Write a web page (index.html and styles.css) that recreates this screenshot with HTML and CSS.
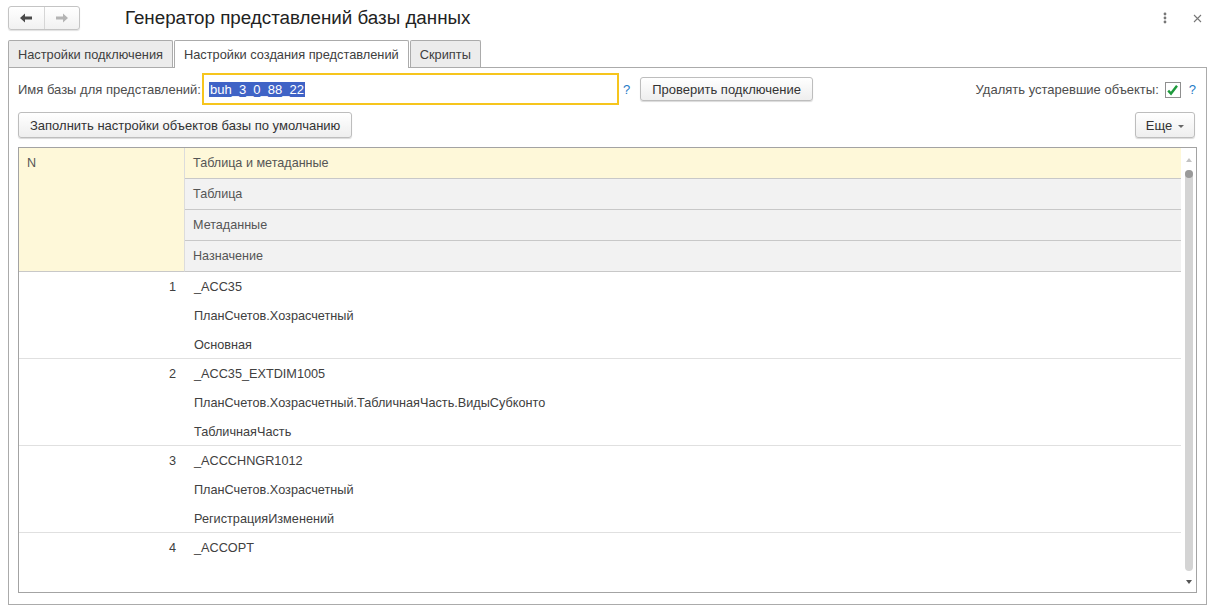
FILE: index.html
```html
<!DOCTYPE html>
<html lang="ru">
<head>
<meta charset="utf-8">
<title>Генератор представлений базы данных</title>
<link rel="stylesheet" href="styles.css">
</head>
<body>
<div class="topbar">
  <div class="nav">
    <span class="nav-btn">
      <svg width="14" height="12" viewBox="0 0 14 12"><path d="M1 6 L6 1.5 L6 4.6 L13 4.6 L13 7.4 L6 7.4 L6 10.5 Z" fill="#4a4a4a"/></svg>
    </span>
    <span class="nav-btn">
      <svg width="14" height="12" viewBox="0 0 14 12"><path d="M13 6 L8 1.5 L8 4.6 L1 4.6 L1 7.4 L8 7.4 L8 10.5 Z" fill="#b4b4b4"/></svg>
    </span>
  </div>
  <div class="title">Генератор представлений базы данных</div>
  <div class="win-icons">
    <svg class="more" width="4" height="12" viewBox="0 0 4 12"><circle cx="2" cy="2" r="1.4" fill="#777"/><circle cx="2" cy="6" r="1.4" fill="#777"/><circle cx="2" cy="10" r="1.4" fill="#777"/></svg>
    <svg class="close" width="9" height="9" viewBox="0 0 9 9"><path d="M1 1 L8 8 M8 1 L1 8" stroke="#777" stroke-width="1.1"/></svg>
  </div>
</div>

<div class="tabs">
  <div class="tab">Настройки подключения</div>
  <div class="tab active">Настройки создания представлений</div>
  <div class="tab">Скрипты</div>
</div>

<div class="panel">
  <div class="row row1">
    <span class="label">Имя базы для представлений:</span>
    <div class="input"><span class="sel">buh_3_0_88_22</span></div>
    <span class="help">?</span>
    <button class="btn btn-check">Проверить подключение</button>
    <div class="spacer"></div>
    <span class="label">Удалять устаревшие объекты:</span>
    <span class="checkbox">
      <svg width="13" height="13" viewBox="0 0 13 13"><path d="M2.2 6.6 L5 9.6 L11 1.8" fill="none" stroke="#1e9a3c" stroke-width="2.4"/></svg>
    </span>
    <span class="help help-right">?</span>
  </div>
  <div class="row row2">
    <button class="btn btn-fill">Заполнить настройки объектов базы по умолчанию</button>
    <div class="spacer"></div>
    <button class="btn btn-more">Еще <span class="caret"></span></button>
  </div>

  <div class="table">
    <div class="table-main">
      <div class="thead">
        <div class="th-n">N</div>
        <div class="th th-yellow">Таблица и метаданные</div>
        <div class="th">Таблица</div>
        <div class="th">Метаданные</div>
        <div class="th">Назначение</div>
      </div>
      <div class="tbody">
        <div class="rec">
          <div class="num">1</div>
          <div class="cells"><div>_ACC35</div><div>ПланСчетов.Хозрасчетный</div><div>Основная</div></div>
        </div>
        <div class="rec">
          <div class="num">2</div>
          <div class="cells"><div>_ACC35_EXTDIM1005</div><div>ПланСчетов.Хозрасчетный.ТабличнаяЧасть.ВидыСубконто</div><div>ТабличнаяЧасть</div></div>
        </div>
        <div class="rec">
          <div class="num">3</div>
          <div class="cells"><div>_ACCCHNGR1012</div><div>ПланСчетов.Хозрасчетный</div><div>РегистрацияИзменений</div></div>
        </div>
        <div class="rec rec-last">
          <div class="num">4</div>
          <div class="cells"><div>_ACCOPT</div></div>
        </div>
      </div>
    </div>
    <div class="scroll">
      <span class="arrow-up"></span>
      <div class="track"><span class="knob"></span></div>
      <span class="arrow-down"></span>
    </div>
  </div>
</div>
</body>
</html>
```

FILE: styles.css
```css
* { box-sizing: border-box; }
html, body { margin: 0; padding: 0; background: #fff; }
body {
  font-family: "Liberation Sans", Arial, sans-serif;
  font-size: 13px;
  color: #4d4d4d;
  width: 1217px;
  height: 610px;
  overflow: hidden;
}

.topbar {
  height: 36px;
  display: flex;
  align-items: center;
  padding-left: 8px;
}
.nav {
  display: flex;
  width: 72px;
  height: 24px;
  border: 1px solid #c4c4c4;
  border-radius: 3px;
  background: linear-gradient(#ffffff, #f1f1f1);
  box-shadow: 0 1px 1px rgba(0,0,0,0.12);
}
.nav-btn {
  flex: 1;
  display: flex;
  align-items: center;
  justify-content: center;
}
.nav-btn + .nav-btn { border-left: 1px solid #d6d6d6; }
.title {
  margin-left: 45px;
  font-size: 18.8px;
  color: #222;
  flex: 1;
}
.win-icons {
  display: flex;
  align-items: center;
  gap: 26px;
  padding-right: 15px;
}

.tabs {
  display: flex;
  margin-top: 4px;
  padding-left: 8px;
  height: 27px;
  position: relative;
  z-index: 2;
}
.tab {
  height: 27px;
  padding: 0 9px;
  display: flex;
  align-items: center;
  background: #ececec;
  border: 1px solid #ababab;
  border-bottom: none;
  border-radius: 2px 2px 0 0;
  color: #404040;
  font-size: 12.8px;
  white-space: nowrap;
}
.tab + .tab { margin-left: 1px; }
.tab.active {
  background: #fff;
  height: 28px;
}

.panel {
  margin: 0 10px 0 8px;
  height: 538px;
  border: 1px solid #ababab;
  padding: 5px 10px 0 9px;
  position: relative;
  z-index: 1;
}

.row { display: flex; align-items: center; }
.row1 { height: 32px; }
.row2 { height: 28px; margin-top: 6px; }
.spacer { flex: 1; }
.label { color: #4d4d4d; white-space: nowrap; }

.input {
  width: 417px;
  height: 32px;
  margin-left: 1px;
  border: 2px solid #f6c51d;
  display: flex;
  align-items: center;
  padding-left: 5px;
}
.sel {
  background: #3f63c6;
  color: #fff;
  line-height: 15px;
  padding: 0 1px;
}
.help {
  color: #1f7bc6;
  margin-left: 4px;
  font-size: 13px;
}
.btn {
  font-family: inherit;
  font-size: 13px;
  color: #333;
  background: linear-gradient(#ffffff, #eeeeee);
  border: 1px solid #bdbdbd;
  border-radius: 3px;
  box-shadow: 0 1px 1px rgba(0,0,0,0.15);
  padding: 0 12px;
  margin: 0;
  white-space: nowrap;
}
.btn-check { height: 24px; margin-left: 10px; padding: 0 11px; }
.btn-fill { height: 26px; padding: 0 11px; }
.btn-more { height: 26px; width: 60px; margin-right: 1px; display: flex; align-items: center; justify-content: center; padding: 0; gap: 6px; }
.caret {
  width: 0; height: 0;
  border-left: 3px solid transparent;
  border-right: 3px solid transparent;
  border-top: 3px solid #666;
  margin-top: 2px;
}

.checkbox {
  width: 16px;
  height: 16px;
  border: 1px solid #8f8f8f;
  margin-left: 6px;
  display: flex;
  align-items: center;
  justify-content: center;
  background: #fff;
  margin-top: 2px;
}
.help-right { margin-left: 8px; margin-right: 0; }

.table {
  margin-top: 8px;
  height: 446px;
  width: 1179px;
  border: 1px solid #a3a3a3;
  display: flex;
  overflow: hidden;
}
.table-main { flex: 1; display: flex; flex-direction: column; }
.thead {
  display: grid;
  grid-template-columns: 166px 1fr;
  grid-template-rows: repeat(4, 31px);
  font-size: 12.6px;
}
.th-n {
  grid-row: 1 / span 4;
  background: #fef8d9;
  border-right: 1px solid #dcdcdc;
  border-bottom: 1px solid #c8c8c8;
  padding: 8px 0 0 8px;
  color: #555;
}
.th {
  background: #f2f2f2;
  border-bottom: 1px solid #c8c8c8;
  padding-left: 8px;
  display: flex;
  align-items: center;
  color: #555;
}
.th-yellow { background: #fef8d9; }

.tbody { flex: 1; font-size: 12.7px; }
.rec {
  display: grid;
  grid-template-columns: 166px 1fr;
  height: 87px;
  border-bottom: 1px solid #e0e0e0;
  color: #404040;
  overflow: hidden;
}
.rec-last { border-bottom: none; }
.num {
  text-align: right;
  padding-right: 9px;
  line-height: 30px;
}
.cells { padding-left: 9px; padding-top: 1px; }
.cells div { line-height: 29px; height: 29px; }

.scroll {
  width: 15px;
  display: flex;
  flex-direction: column;
  align-items: center;
  padding-top: 10px;
}
.arrow-up {
  width: 0; height: 0;
  border-left: 3.5px solid transparent;
  border-right: 3.5px solid transparent;
  border-bottom: 4px solid #c2c2c2;
}
.track {
  margin-top: 8px;
  width: 8px;
  height: 401px;
  background: #d4d4d4;
  border-radius: 4px;
  position: relative;
}
.knob {
  position: absolute;
  top: 0; left: 0;
  width: 8px; height: 8px;
  border-radius: 50%;
  background: #9a9a9a;
}
.arrow-down {
  margin-top: 9px;
  width: 0; height: 0;
  border-left: 3.5px solid transparent;
  border-right: 3.5px solid transparent;
  border-top: 4px solid #555;
}
```
